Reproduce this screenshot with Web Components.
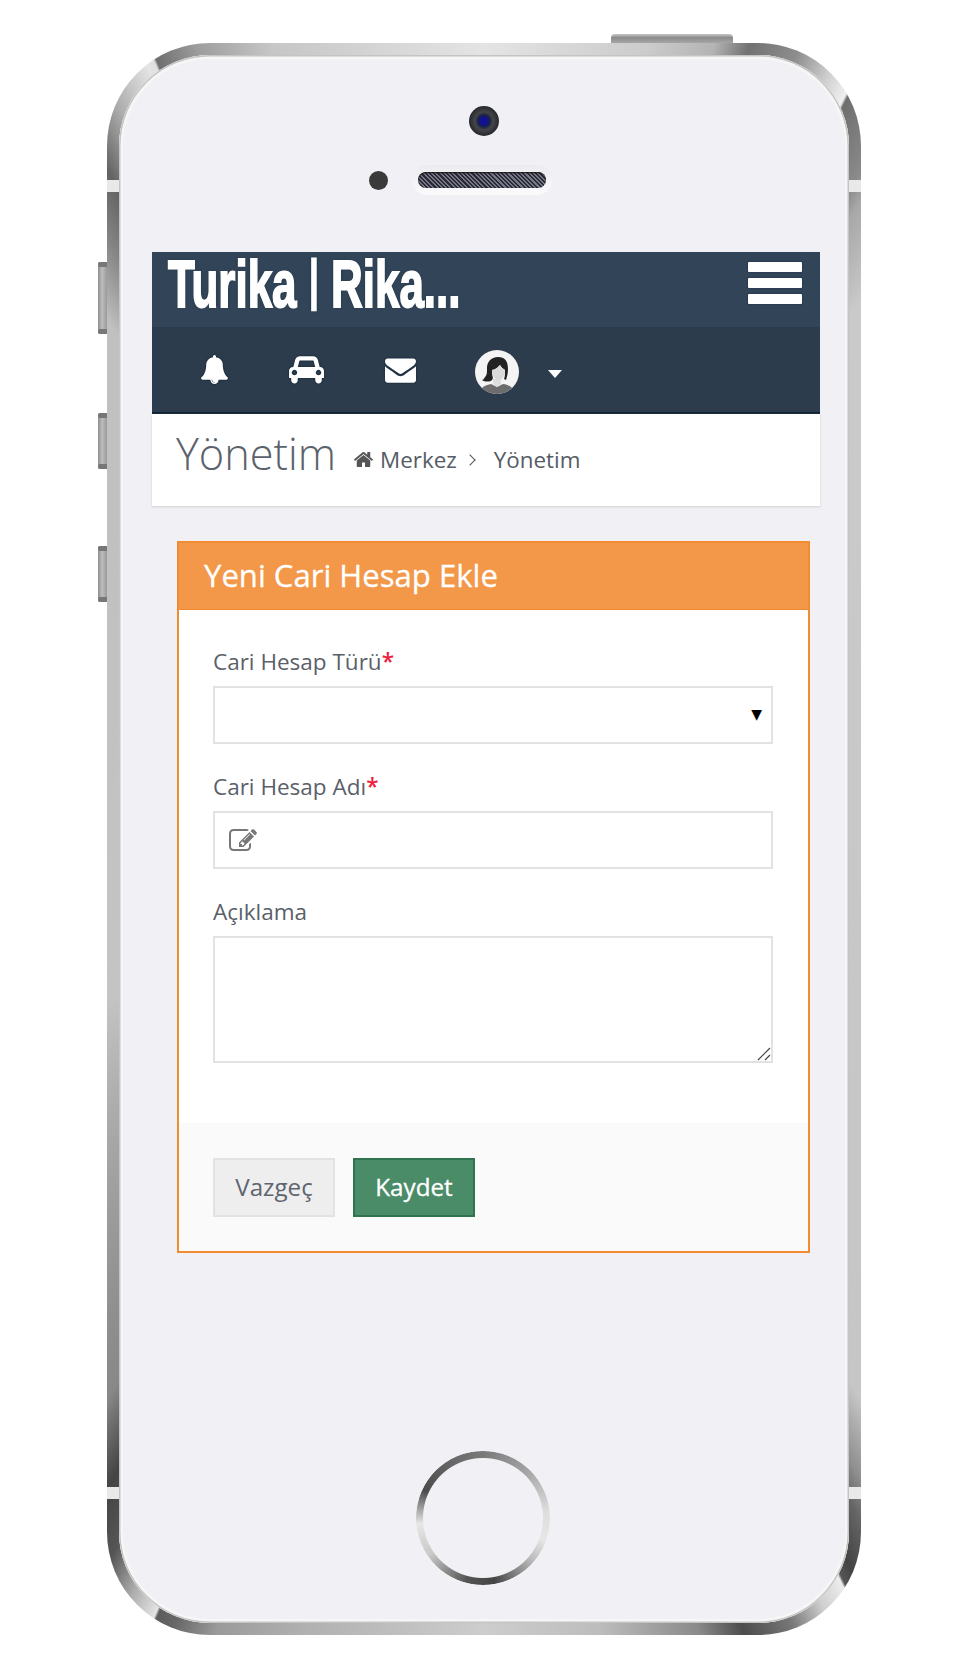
<!DOCTYPE html>
<html lang="tr">
<head>
<meta charset="utf-8">
<title>Yeni Cari Hesap Ekle</title>
<style>
  html, body { margin: 0; background: #fff; font-family: "Open Sans", "Liberation Sans", sans-serif; }
</style>
</head>
<body>

<phone-shell>
  <phone-notch></phone-notch>
  <app-header title-text="Turika | Rika..."></app-header>
  <page-title heading="Yönetim" crumb="Merkez" current="Yönetim"></page-title>
  <form-panel heading="Yeni Cari Hesap Ekle">
    <form-field label="Cari Hesap Türü" required type="select"></form-field>
    <form-field label="Cari Hesap Adı" required type="text"></form-field>
    <form-field label="Açıklama" type="textarea"></form-field>
    <button-bar slot="footer"></button-bar>
  </form-panel>
  <home-button></home-button>
</phone-shell>

<script>
// font awesome 4 glyphs, viewBox is always 1792 high
const ICONS = {
  bell: [1792, "M912 1696q0-16-16-16-59 0-101.5-42.5t-42.5-101.5q0-16-16-16t-16 16q0 73 51.5 124.5t124.5 51.5q16 0 16-16zm816-288q0 52-38 90t-90 38h-448q0 106-75 181t-181 75-181-75-75-181h-448q-52 0-90-38t-38-90q50-42 91-88t85-119.5 74.5-158.5 50-206 19.5-260q0-152 117-282.5t307-158.5q-8-19-8-39 0-40 28-68t68-28 68 28 28 68q0 20-8 39 190 28 307 158.5t117 282.5q0 139 19.5 260t50 206 74.5 158.5 85 119.5 91 88z"],
  car: [2048, "M480 1088q0-66-47-113t-113-47-113 47-47 113 47 113 113 47 113-47 47-113zm36-320h1016l-89-357q-2-8-14-17.5t-21-9.5h-768q-9 0-21 9.5t-14 17.5zm1372 320q0-66-47-113t-113-47-113 47-47 113 47 113 113 47 113-47 47-113zm160-96v384q0 14-9 23t-23 9h-96v128q0 80-56 136t-136 56-136-56-56-136v-128h-1024v128q0 80-56 136t-136 56-136-56-56-136v-128h-96q-14 0-23-9t-9-23v-384q0-93 65.5-158.5t158.5-65.5h28l105-419q23-94 104-157.5t179-63.5h768q98 0 179 63.5t104 157.5l105 419h28q93 0 158.5 65.5t65.5 158.5z"],
  envelope: [1792, "M1792 710v794q0 66-47 113t-113 47h-1472q-66 0-113-47t-47-113v-794q44 49 101 87 362 246 497 345 57 42 92.5 65.5t94.5 48 110 24.5h2q51 0 110-24.5t94.5-48 92.5-65.5q170-123 498-345 57-39 100-87zm0-294q0 79-49 151t-122 123q-376 261-468 325-10 7-42.5 30.5t-54 38-52 32.5-57.5 27-50 9h-2q-23 0-50-9t-57.5-27-52-32.5-54-38-42.5-30.5q-91-64-262-182.5t-205-142.5q-62-42-117-115.5t-55-136.5q0-78 41.5-130t118.5-52h1472q65 0 112.5 47t47.5 113z"],
  home: [1792, "M1472 992v480q0 26-19 45t-45 19h-384v-384h-256v384h-384q-26 0-45-19t-19-45v-480q0-1 .5-3t.5-3l575-474 575 474q1 2 1 6zm223-69l-62 74q-8 9-21 11h-3q-13 0-21-7l-692-577-692 577q-12 8-24 7-13-2-21-11l-62-74q-8-10-7-23.5t11-21.5l719-599q32-26 76-26t76 26l244 204v-195q0-14 9-23t23-9h192q14 0 23 9t9 23v408l219 182q10 8 11 21.5t-7 23.5z"],
  edit: [1792, "M888 1184l116-116-152-152-116 116v56h96v96h56zm440-720q-16-16-33 1l-350 350q-17 17-1 33t33-1l350-350q17-17 1-33zm80 594v190q0 119-84.5 203.5t-203.5 84.5h-832q-119 0-203.5-84.5t-84.5-203.5v-832q0-119 84.5-203.5t203.5-84.5h832q63 0 117 25 15 7 18 23 3 17-9 29l-49 49q-14 14-32 8-23-6-45-6h-832q-66 0-113 47t-47 113v832q0 66 47 113t113 47h832q66 0 113-47t47-113v-126q0-13 9-22l64-64q15-15 35-9t20 29zm-96-738l288 288-672 672h-288v-288zm444 132l-92 92-288-288 92-92q28-28 68-28t68 28l152 152q28 28 28 68t-28 68z"],
};

class FaIcon extends HTMLElement {
  connectedCallback() {
    const [w, d] = ICONS[this.getAttribute("name")];
    this.attachShadow({ mode: "open" }).innerHTML = `
      <style>
        :host { display: inline-flex; line-height: 0; }
        svg { width: 100%; height: 100%; fill: currentColor; overflow: visible; }
      </style>
      <svg viewBox="0 0 ${w} 1792" preserveAspectRatio="xMidYMid meet"><path d="${d}"/></svg>`;
  }
}

// metal band colours, as points on the edge of the phone (x, y, colour), clockwise
const BAND = [
  [484, 43, "#e4e4e4"], [650, 43, "#cbcbcb"], [715, 43, "#b4b4b4"], [750, 43, "#727272"],
  [795, 58, "#8d8d8d"], [825, 82, "#cfcfcf"], [842, 102, "#f0f0f0"], [844, 104, "#6e6e6e"],
  [861, 170, "#8a8a8a"], [861, 200, "#a8a8a8"], [861, 300, "#cacaca"], [861, 1400, "#c6c6c6"],
  [861, 1480, "#8f8f8f"], [861, 1520, "#666"], [851, 1568, "#444"], [843, 1580, "#555"],
  [841, 1582, "#ededed"], [820, 1600, "#cfcfcf"], [790, 1620, "#777"], [745, 1635, "#4c4c4c"],
  [700, 1635, "#8a8a8a"], [600, 1635, "#bdbdbd"], [484, 1635, "#cdcdcd"], [300, 1635, "#b0b0b0"],
  [215, 1635, "#9a9a9a"], [175, 1622, "#666"], [159, 1612, "#5c5c5c"], [157, 1610, "#e4e4e4"],
  [135, 1585, "#aaa"], [115, 1550, "#555"], [107, 1490, "#444"], [107, 1400, "#888"],
  [107, 1000, "#c4c4c4"], [107, 320, "#c0c0c0"], [107, 240, "#868686"], [107, 170, "#636363"],
  [118, 110, "#aaa"], [150, 72, "#e4e4e4"], [156, 66, "#e0e0e0"], [158, 64, "#6e6e6e"],
  [195, 46, "#9c9c9c"], [270, 43, "#c6c6c6"],
];

function bandGradient(cx, cy) {
  const stops = BAND.map(([x, y, c]) => {
    let deg = (Math.atan2(x - cx, cy - y) * 180) / Math.PI;
    if (deg < 0) deg += 360;
    return `${c} ${deg.toFixed(2)}deg`;
  });
  return `conic-gradient(${stops.join(",")}, ${BAND[0][2]} 360deg)`;
}

class PhoneShell extends HTMLElement {
  constructor() {
    super();
    this.attachShadow({ mode: "open" }).innerHTML = `
      <style>
        :host {
          display: block; position: relative; box-sizing: border-box;
          width: 754px; height: 1592px; margin: 43px 0 0 107px; padding: 12px;
          border-radius: 103px; background: ${bandGradient(484, 839)};
        }
        .screen {
          box-sizing: border-box; height: 100%; border-radius: 91px;
          background: #f1f1f5; display: flex; flex-direction: column;
          box-shadow: inset 0 0 0 1.5px #c4c4c4, inset 0 0 0 4px #f6f6f6;
        }
        /* gaps in the band and the keys sit on top of the frame */
        .slit { position: absolute; width: 12px; height: 12px; background: #e9e9e9; }
        .key { position: absolute; background: linear-gradient(90deg, #8d8d8d, #bdbdbd 45%, #9a9a9a); border-radius: 2px 0 0 2px; width: 9px; left: -9px; }
        .key::before, .key::after { content: ""; position: absolute; left: 0; right: 0; height: 5px; background: #777; border-radius: 2px 0 0 2px; }
        .key::before { top: 0; } .key::after { bottom: 0; }
        .top-key { position: absolute; left: 504px; top: -9px; width: 122px; height: 9px; border-radius: 4px 4px 0 0; background: linear-gradient(180deg, #c8c8c8, #8c8c8c 40%, #a6a6a6); }
      </style>
      <div class="screen"><slot></slot></div>
      <i class="slit" style="left:0;top:137px"></i>
      <i class="slit" style="right:0;top:137px"></i>
      <i class="slit" style="left:0;top:1444px"></i>
      <i class="slit" style="right:0;top:1444px"></i>
      <i class="key" style="top:219px;height:72px"></i>
      <i class="key" style="top:370px;height:56px"></i>
      <i class="key" style="top:503px;height:56px"></i>
      <i class="top-key"></i>`;
  }
}

class PhoneNotch extends HTMLElement {
  constructor() {
    super();
    this.attachShadow({ mode: "open" }).innerHTML = `
      <style>
        :host { display: block; box-sizing: border-box; height: 197px; padding-top: 51px; }
        .camera {
          width: 30px; height: 30px; margin-left: 350px; border-radius: 50%;
          background: radial-gradient(circle at 50% 50%, #12128e 0 4px, #1b2340 6px, #44464b 9px, #26282b 15px);
        }
        .row { display: flex; align-items: center; margin: 29px 0 0 250px; gap: 24px; }
        .dot { width: 19px; height: 19px; border-radius: 50%; background: #3a3a3a; }
        .speaker {
          box-sizing: border-box; width: 140px; height: 30px; padding: 7px 6px;
          border-radius: 15px; background: linear-gradient(180deg, #ececf0, #fbfbfc);
        }
        .grille {
          height: 16px; border-radius: 8px; box-shadow: inset 0 1px 2px #111;
          background: repeating-linear-gradient(45deg, #2a2a34 0 1.5px, #77778a 1.5px 3px);
        }
      </style>
      <div class="camera"></div>
      <div class="row"><div class="dot"></div><div class="speaker"><div class="grille"></div></div></div>`;
  }
}

class AppHeader extends HTMLElement {
  connectedCallback() {
    const logo = this.getAttribute("title-text").replace("|", '<span class="pipe">|</span>');
    this.attachShadow({ mode: "open" }).innerHTML = `
      <style>
        :host { display: block; margin: 0 29px 0 33px; color: #fff; }
        .top {
          height: 75px; box-sizing: border-box; background: #324558;
          display: flex; justify-content: space-between; padding: 4px 18px 0 16px;
        }
        .logo {
          font: bold 67px/56px "Liberation Sans", sans-serif; width: 280px;
          white-space: nowrap; transform: scaleX(0.655); transform-origin: 0 0;
          -webkit-text-stroke: 2px #fff; text-shadow: 0 0 3px #0b2035;
        }
        .pipe { font-size: 56px; position: relative; top: -9px; -webkit-text-stroke: 1px #fff; }
        .burger { display: flex; flex-direction: column; gap: 6px; width: 54px; margin-top: 6px; }
        .burger i { height: 10px; background: #fff; border-radius: 1px; box-shadow: 0 0 1.5px #0b2035; }
        nav {
          height: 87px; box-sizing: border-box; background: #2c3c4c;
          border-bottom: 2px solid #0f2232; display: flex; align-items: center;
          padding: 0 0 1px 48px;
        }
        fa-icon { filter: drop-shadow(0 0 1px #0b2035); }
        .bell { width: 29px; height: 29px; }
        .car { width: 35px; height: 30.6px; margin-left: 60px; }
        .mail { width: 31px; height: 31px; margin-left: 61px; }
        .avatar { width: 44px; height: 44px; margin: 6px 0 0 59px; }
        .caret { width: 0; height: 0; margin: 9px 0 0 29px; border: 7.5px solid transparent; border-top: 8px solid #fff; border-bottom: 0; }
      </style>
      <div class="top">
        <div class="logo">${logo}</div>
        <div class="burger"><i></i><i></i><i></i></div>
      </div>
      <nav>
        <fa-icon class="bell" name="bell"></fa-icon>
        <fa-icon class="car" name="car"></fa-icon>
        <fa-icon class="mail" name="envelope"></fa-icon>
        <svg class="avatar" viewBox="0 0 44 44">
          <defs><clipPath id="c"><circle cx="22" cy="22" r="22"/></clipPath></defs>
          <g clip-path="url(#c)">
            <rect width="44" height="44" fill="#f4f4f4"/>
            <path d="M4 44c1-7 7-9 12-10l6 3 6-3c6 1 11 3 12 10z" fill="#6d6d6d"/>
            <path d="M18 29h8v5l-4 3-4-3z" fill="#dedede"/>
            <path d="M23 7c-7 0-11 5-11 11 0 5 0 7-2 9-1 2-2 3-3 3 3 2 8 2 10 0l1-2c-1-3-1-5-1-8 3 0 6-3 8-5 1 2 3 4 5 5 0 4 0 7-1 9l2 1c1-3 2-7 2-11 0-8-3-12-10-12z" fill="#222"/>
            <path d="M17 20c3 0 6-3 8-5 1 2 3 4 5 5 0 6-3 10-6 10-4 0-7-4-7-10z" fill="#d9d9d9"/>
          </g>
        </svg>
        <i class="caret"></i>
      </nav>`;
  }
}

class PageTitle extends HTMLElement {
  connectedCallback() {
    this.attachShadow({ mode: "open" }).innerHTML = `
      <style>
        :host {
          display: flex; align-items: center; box-sizing: border-box;
          height: 92px; margin: 0 29px 0 33px; padding: 0 0 12px 24px;
          background: #fff; box-shadow: 0 1px 2px #cfcfd2; color: #555c66;
        }
        h1 { margin: 0 17px 0 0; font: 300 43.3px/1 "Open Sans", sans-serif; color: #5b626b; }
        .crumbs { display: flex; align-items: center; font-size: 22.4px; margin-top: 11px; }
        fa-icon { width: 21px; height: 21px; margin-right: 6px; color: #555; }
        .sep { width: 8px; height: 8px; margin: 0 20px 0 9px; border: solid #555; border-width: 1.5px 1.5px 0 0; transform: rotate(45deg); box-sizing: border-box; }
      </style>
      <h1>${this.getAttribute("heading")}</h1>
      <div class="crumbs">
        <fa-icon name="home"></fa-icon><span>${this.getAttribute("crumb")}</span>
        <i class="sep"></i><span>${this.getAttribute("current")}</span>
      </div>`;
  }
}

class FormPanel extends HTMLElement {
  connectedCallback() {
    this.attachShadow({ mode: "open" }).innerHTML = `
      <style>
        :host {
          display: block; box-sizing: border-box; height: 712px;
          margin: 35px 39px 0 58px; border: 2px solid #f28c33;
          background: #fff; display: flex; flex-direction: column;
        }
        header {
          height: 67px; box-sizing: border-box; margin: 0; padding-left: 25px;
          background: #f39749; border-bottom: 1px solid #f08a30; color: #fff;
          font-size: 31.1px; line-height: 64px; white-space: nowrap;
          -webkit-text-stroke: 0.3px #fff;
        }
        .body { flex: 1; padding: 35px 35px 0 34px; }
        footer { height: 128px; box-sizing: border-box; padding: 35px 35px 0 34px; background: #fafafa; }
      </style>
      <header>${this.getAttribute("heading")}</header>
      <div class="body"><slot></slot></div>
      <footer><slot name="footer"></slot></footer>`;
  }
}

class FormField extends HTMLElement {
  connectedCallback() {
    const type = this.getAttribute("type");
    const star = this.hasAttribute("required") ? "<b>*</b>" : "";
    let control = "";
    if (type === "select") {
      control = `<div class="wrap"><select></select><span class="arrow">▼</span></div>`;
    } else if (type === "text") {
      control = `<div class="wrap"><fa-icon name="edit"></fa-icon><input type="text"></div>`;
    } else {
      control = `<div class="wrap"><textarea></textarea>
        <svg class="grip" viewBox="0 0 14 14"><path d="M1 13L13 1M8 13l5-5" stroke="#444" stroke-width="1.2" fill="none"/></svg></div>`;
    }
    this.attachShadow({ mode: "open" }).innerHTML = `
      <style>
        :host { display: block; margin-bottom: 26px; color: #5a5f69; }
        label { display: block; height: 34px; margin-bottom: 7px; font-size: 22.5px; line-height: 34px; white-space: nowrap; }
        b { color: #f0203c; font-weight: 600; }
        .wrap { position: relative; }
        select, input, textarea {
          display: block; box-sizing: border-box; width: 100%; margin: 0; height: 58px;
          border: 2px solid #e2e2e2; background: #fff; border-radius: 0; outline: none;
          appearance: none; font: inherit; resize: none;
        }
        textarea { height: 127px; }
        input { padding-left: 50px; }
        .arrow { position: absolute; right: 11px; top: 18px; color: #000; font: 14px/20px "DejaVu Sans", sans-serif; }
        fa-icon { position: absolute; left: 16px; top: 16px; width: 28px; height: 28px; color: #777; }
        .grip { position: absolute; right: 2px; bottom: 2px; width: 14px; height: 14px; }
      </style>
      <label>${this.getAttribute("label")}${star}</label>
      ${control}`;
  }
}

class ButtonBar extends HTMLElement {
  constructor() {
    super();
    this.attachShadow({ mode: "open" }).innerHTML = `
      <style>
        :host { display: flex; gap: 18px; }
        button {
          box-sizing: border-box; width: 122px; height: 59px; padding: 0 0 2px; margin: 0;
          font: 24.2px "Open Sans", sans-serif; border-radius: 0;
        }
        .cancel { background: #eee; border: 2px solid #e2e2e2; color: #5f6570; }
        .save { background: #4a8b68; border: 2px solid #2f7350; color: #fff; -webkit-text-stroke: 0.3px #fff; }
      </style>
      <button class="cancel">Vazgeç</button>
      <button class="save">Kaydet</button>`;
  }
}

class HomeButton extends HTMLElement {
  constructor() {
    super();
    this.attachShadow({ mode: "open" }).innerHTML = `
      <style>
        :host { display: block; width: 134px; height: 134px; margin: 198px 0 0 297px; }
        .ring {
          width: 100%; height: 100%; border-radius: 50%;
          background: conic-gradient(#7a7a7a 0deg, #a0a0a0 40deg, #dedede 85deg, #e6e6e6 110deg, #bcbcbc 130deg, #444 170deg, #555 195deg, #c8c8c8 235deg, #e6e6e6 265deg, #4c4c4c 295deg, #666 330deg, #7a7a7a 360deg);
          -webkit-mask: radial-gradient(circle, transparent 59.5px, #000 60.5px);
          mask: radial-gradient(circle, transparent 59.5px, #000 60.5px);
        }
      </style>
      <div class="ring"></div>`;
  }
}

customElements.define("fa-icon", FaIcon);
customElements.define("phone-shell", PhoneShell);
customElements.define("phone-notch", PhoneNotch);
customElements.define("app-header", AppHeader);
customElements.define("page-title", PageTitle);
customElements.define("form-panel", FormPanel);
customElements.define("form-field", FormField);
customElements.define("button-bar", ButtonBar);
customElements.define("home-button", HomeButton);
</script>
</body>
</html>
